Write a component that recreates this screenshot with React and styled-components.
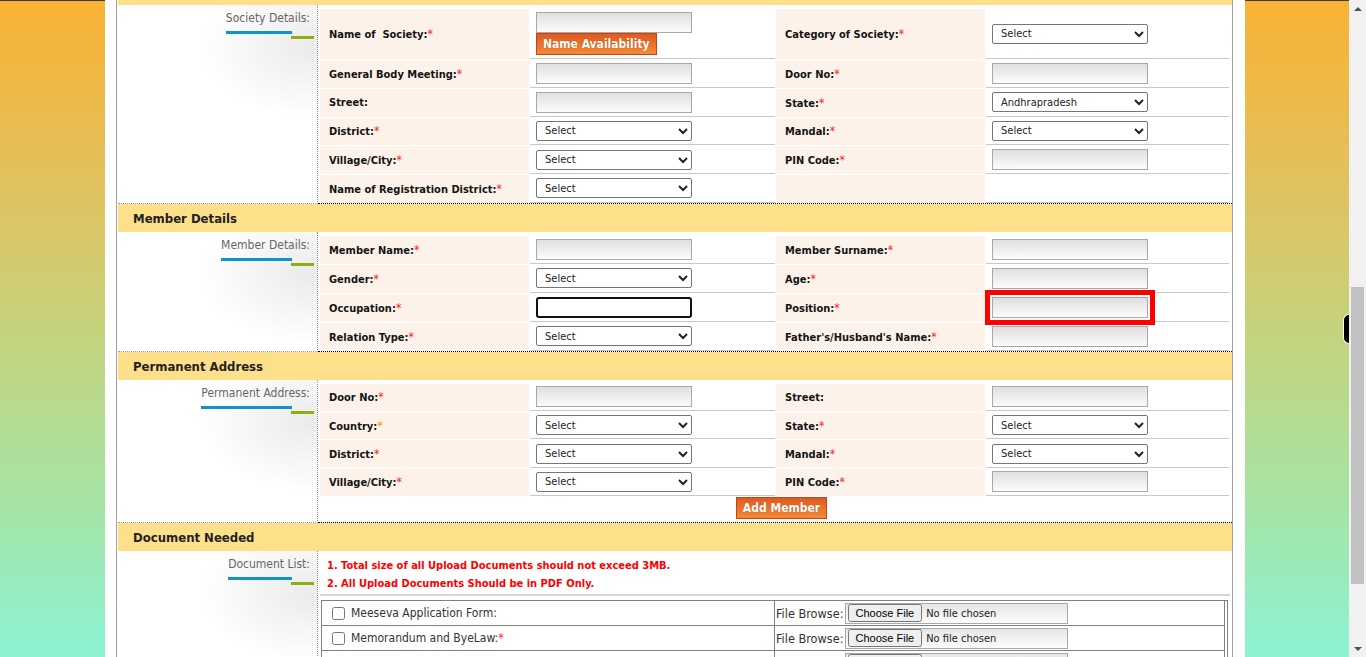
import React from "react";
import styled, { createGlobalStyle } from "styled-components";

const FONT = `Tahoma, "DejaVu Sans Condensed", "DejaVu Sans", sans-serif`;

const GlobalStyle = createGlobalStyle`
  html, body {
    margin: 0;
    padding: 0;
    height: 100%;
    overflow: hidden;
  }
  body {
    font-family: ${FONT};
    color: #111;
  }
`;

const Screen = styled.div`
  display: flex;
  height: 657px;
`;

const Viewport = styled.div`
  flex: 1;
  position: relative;
  overflow: hidden;
  background:
    linear-gradient(#3b3b3b, #3b3b3b) top / 100% 1px no-repeat,
    linear-gradient(180deg, #f9b233 0%, #e2c15e 28%, #c3d47f 52%, #a6e3a4 76%, #8cf3d4 100%);
`;

const FeedbackTab = styled.div`
  position: absolute;
  right: 0;
  top: 314px;
  width: 5px;
  height: 28px;
  background: #000;
  border: 1px solid #fff;
  border-right: none;
  border-radius: 7px 0 0 7px;
`;

const Page = styled.div`
  width: 1140px;
  box-sizing: border-box;
  margin-left: 105px;
  padding: 0 12px 0 11px;
  background: #fff;
  min-height: 720px;
`;

const Frame = styled.div`
  border-left: 1px solid #a0a0a0;
  border-right: 1px solid #a0a0a0;
  padding-left: 1px;
  min-height: 720px;
`;

/* the first header is scrolled mostly out of view: only its lower strip shows */
const SectionHead = styled.div`
  height: ${(p) => (p.$strip ? "5px" : "28px")};
  line-height: 30px;
  background: #fee08a;
  padding-left: 15px;
  font-family: ${FONT};
  font-weight: bold;
  font-size: 13px;
  color: #222;
`;

const SectionBody = styled.div`
  display: grid;
  grid-template-columns: 200px 1fr;
`;

const Aside = styled.div`
  border-right: 1px dotted #8a8a8a;
  border-bottom: 1px dotted #9a9a9a;
  padding: 6px 3px 0 0;
  text-align: right;
  background: radial-gradient(ellipse 110px 70px at 96% 42px, #ebebeb, rgba(255, 255, 255, 0)) no-repeat;
`;

const AsideTag = styled.div`
  display: inline-block;
  padding-left: 5px;
`;

const AsideText = styled.div`
  padding-right: 4px;
  font-size: 12px;
  line-height: 15px;
  color: #666;
`;

const AsideBars = styled.div`
  display: flex;
  align-items: flex-start;
  margin-top: 5px;
`;

const BlueBar = styled.div`
  flex: 1;
  height: 3px;
  background: #1293c8;
`;

const GreenBar = styled.div`
  width: 23px;
  height: 3px;
  margin: 5px 0 0 -1px;
  background: #8fae12;
`;

const FormArea = styled.div`
  padding: 4px 2px 0;
  border-bottom: 1px dotted #000;
`;

const FormGrid = styled.div`
  display: grid;
  grid-template-columns: 209px 245px 209px 243px;
  ${(p) => p.$first && `grid-template-rows: ${p.$first}px;`}
  grid-auto-rows: ${(p) => p.$row}px;
  column-gap: 1px;
  row-gap: 1px;
`;

const LabelCell = styled.div`
  display: flex;
  align-items: center;
  padding-left: 9px;
  background: #fdf2e9;
  font-size: 11px;
  font-weight: bold;
  color: #141414;
`;

const Req = styled.span`
  color: ${(p) => (p.$tone === "orange" ? "#ff8a00" : "#ff1a1a")};
  font-weight: normal;
  font-size: 12px;
`;

const InputCell = styled.div`
  display: flex;
  flex-direction: column;
  justify-content: center;
  align-items: flex-start;
  padding-left: 6px;
  border-bottom: 1px solid #c8c8c8;
`;

const TextBox = styled.input`
  width: 156px;
  height: 21px;
  box-sizing: border-box;
  margin: 0;
  border: ${(p) => (p.$focused ? "2px solid #111" : "1px solid #a8a8a8")};
  border-radius: ${(p) => (p.$focused ? "3px" : "0")};
  background: ${(p) => (p.$focused ? "#fff" : "linear-gradient(180deg, #dfdfdf, #fcfcfc)")};
  outline: ${(p) => (p.$flagged ? "5px solid #ff0000" : "none")};
  outline-offset: 2px;
  font: 11px ${FONT};
`;

const Dropdown = styled.select`
  width: 156px;
  height: 20px;
  box-sizing: border-box;
  margin: 0;
  padding: 0 4px;
  border: 1px solid #767676;
  border-radius: 2px;
  background: #fff;
  color: #222;
  font: 11px ${FONT};
`;

const OrangeButton = styled.button`
  margin: 0;
  padding: 0 6px;
  height: 22px;
  border: 1px solid #c2461a;
  background: linear-gradient(180deg, #df5a20, #f48a37);
  color: #fff;
  font: bold 12px ${FONT};
  text-shadow: 0 0 1px rgba(120, 40, 0, 0.6);
  cursor: pointer;
`;

const ButtonRow = styled.div`
  display: flex;
  justify-content: center;
  padding: 1px 0 3px 13px;
`;

const Notes = styled.div`
  padding: 2px 0 1px 7px;
  border-bottom: 2px solid #d6d6d6;
`;

const Note = styled.div`
  color: #ff0000;
  font-size: 11px;
  font-weight: bold;
  line-height: 18px;
`;

const DocTable = styled.div`
  margin: 4px 2px 0 1px;
  border: 1px solid #808080;
  padding-right: 2px;
`;

const DocRow = styled.div`
  display: grid;
  grid-template-columns: 453px 1fr;
  height: 24px;
  border-bottom: 1px solid #808080;
`;

const DocName = styled.label`
  display: flex;
  align-items: center;
  padding-left: 6px;
  border-right: 1px solid #808080;
  font-size: 12px;
  color: #333;

  input {
    margin: 3px 6px 3px 4px;
  }
`;

const DocFile = styled.div`
  display: flex;
  align-items: center;
  padding-left: 1px;
  font-size: 12.6px;
  color: #333;
  border-right: 1px solid #808080;

  input {
    margin-left: 1px;
    padding: 0 2px;
    width: 223px;
    height: 21px;
    box-sizing: border-box;
    border: 1px solid #a8a8a8;
    background: linear-gradient(180deg, #e6e6e6, #fcfcfc);
    font: 11px ${FONT};
    color: #222;
  }
`;

const Scrollbar = styled.div`
  width: 17px;
  background: #f1f1f1;
  display: flex;
  flex-direction: column;
`;

const ScrollArrow = styled.div`
  height: 17px;
  display: flex;
  align-items: center;
  justify-content: center;

  &::before {
    content: "";
    border-left: 4px solid transparent;
    border-right: 4px solid transparent;
    ${(p) =>
      p.$down ? "border-top: 4px solid #505050;" : "border-bottom: 4px solid #505050;"}
  }
`;

const Track = styled.div`
  flex: 1;
  padding: 0 2px;
`;

const Thumb = styled.div`
  margin-top: ${(p) => p.$offset}px;
  height: ${(p) => p.$size}px;
  background: #c1c1c1;
`;

const Label = ({ text, req, tone }) => (
  <LabelCell>
    <span>
      {text}
      {req && <Req $tone={tone}>*</Req>}
    </span>
  </LabelCell>
);

const Field = ({ f }) => {
  if (!f) return <InputCell />;
  if (f.type === "select")
    return (
      <InputCell>
        <Dropdown defaultValue={f.value || "Select"}>
          <option>{f.value || "Select"}</option>
        </Dropdown>
      </InputCell>
    );
  return (
    <InputCell>
      <TextBox type="text" $focused={f.focused} $flagged={f.flagged} />
      {f.button && <OrangeButton>{f.button}</OrangeButton>}
    </InputCell>
  );
};

const Section = ({ title, aside, strip, children }) => (
  <>
    <SectionHead $strip={strip}>{strip ? null : title}</SectionHead>
    <SectionBody>
      <Aside>
        <AsideTag>
          <AsideText>{aside}</AsideText>
          <AsideBars>
            <BlueBar />
            <GreenBar />
          </AsideBars>
        </AsideTag>
      </Aside>
      <FormArea>{children}</FormArea>
    </SectionBody>
  </>
);

const Rows = ({ rows, row, first }) => (
  <FormGrid $row={row} $first={first}>
    {rows.map((r, i) => (
      <React.Fragment key={i}>
        {r[0] ? <Label {...r[0]} /> : <LabelCell />}
        <Field f={r[1]} />
        {r[2] ? <Label {...r[2]} /> : <LabelCell />}
        <Field f={r[3]} />
      </React.Fragment>
    ))}
  </FormGrid>
);

const T = { type: "text" };
const S = { type: "select" };

const societyRows = [
  [{ text: "Name of\u00a0 Society:", req: true }, { type: "text", button: "Name Availability" }, { text: "Category of Society:", req: true }, S],
  [{ text: "General Body Meeting:", req: true }, T, { text: "Door No:", req: true }, T],
  [{ text: "Street:" }, T, { text: "State:", req: true }, { type: "select", value: "Andhrapradesh" }],
  [{ text: "District:", req: true }, S, { text: "Mandal:", req: true }, S],
  [{ text: "Village/City:", req: true }, S, { text: "PIN Code:", req: true }, T],
  [{ text: "Name of Registration District:", req: true }, S, null, null],
];

const memberRows = [
  [{ text: "Member Name:", req: true }, T, { text: "Member Surname:", req: true }, T],
  [{ text: "Gender:", req: true }, S, { text: "Age:", req: true }, T],
  [{ text: "Occupation:", req: true }, { type: "text", focused: true }, { text: "Position:", req: true }, { type: "text", flagged: true }],
  [{ text: "Relation Type:", req: true }, S, { text: "Father's/Husband's Name:", req: true }, T],
];

const addressRows = [
  [{ text: "Door No:", req: true }, T, { text: "Street:" }, T],
  [{ text: "Country:", req: true, tone: "orange" }, S, { text: "State:", req: true }, S],
  [{ text: "District:", req: true }, S, { text: "Mandal:", req: true }, S],
  [{ text: "Village/City:", req: true }, S, { text: "PIN Code:", req: true }, T],
];

const documents = [
  { name: "Meeseva Application Form:" },
  { name: "Memorandum and ByeLaw:", req: true },
  { name: "Society Members Affidavit:", req: true },
];

export default function App() {
  return (
    <>
      <GlobalStyle />
      <Screen>
        <Viewport>
          <Page>
            <Frame>
              <Section strip title="Society Details" aside="Society Details:">
                <Rows rows={societyRows} first={50} row={27.75} />
              </Section>
              <Section title="Member Details" aside="Member Details:">
                <Rows rows={memberRows} row={28} />
              </Section>
              <Section title="Permanent Address" aside="Permanent Address:">
                <Rows rows={addressRows} row={27.33} />
                <ButtonRow>
                  <OrangeButton>Add Member</OrangeButton>
                </ButtonRow>
              </Section>
              <Section title="Document Needed" aside="Document List:">
                <Notes>
                  <Note>1. Total size of all Upload Documents should not exceed 3MB.</Note>
                  <Note>2. All Upload Documents Should be in PDF Only.</Note>
                </Notes>
                <DocTable>
                  {documents.map((d) => (
                    <DocRow key={d.name}>
                      <DocName>
                        <input type="checkbox" />
                        <span>
                          {d.name}
                          {d.req && <Req>*</Req>}
                        </span>
                      </DocName>
                      <DocFile>
                        File Browse:
                        <input type="file" />
                      </DocFile>
                    </DocRow>
                  ))}
                </DocTable>
              </Section>
            </Frame>
          </Page>
          <FeedbackTab />
        </Viewport>
        <Scrollbar>
          <ScrollArrow />
          <Track>
            <Thumb $offset={270} $size={297} />
          </Track>
          <ScrollArrow $down />
        </Scrollbar>
      </Screen>
    </>
  );
}
